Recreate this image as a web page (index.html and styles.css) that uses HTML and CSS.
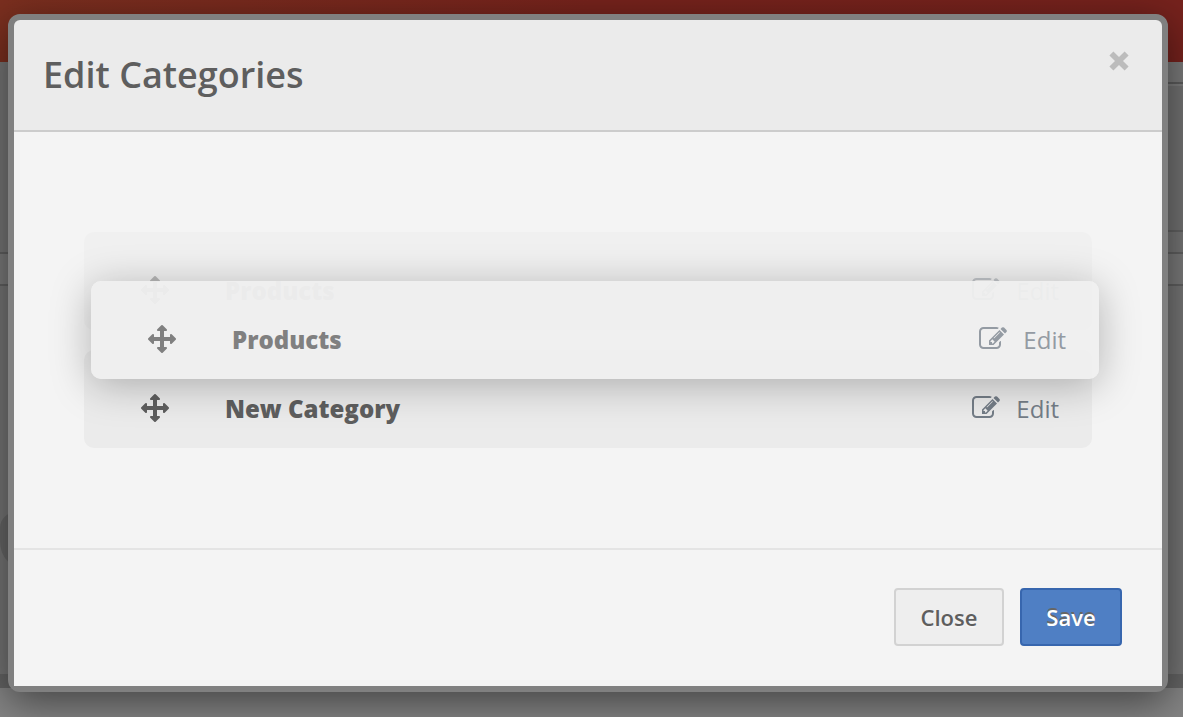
FILE: index.html
```html
<!DOCTYPE html>
<html lang="en">
<head>
<meta charset="utf-8">
<title>Edit Categories</title>
<link rel="stylesheet" href="styles.css">
</head>
<body>
<svg class="sprite" aria-hidden="true">
  <symbol id="move" viewBox="0 0 1792 1792"><path d="M1792 896q0 26-19 45l-256 256q-19 19-45 19t-45-19-19-45v-128h-384v384h128q26 0 45 19t19 45-19 45l-256 256q-19 19-45 19t-45-19l-256-256q-19-19-19-45t19-45 45-19h128v-384h-384v128q0 26-19 45t-45 19-45-19l-256-256q-19-19-19-45t19-45l256-256q19-19 45-19t45 19 19 45v128h384v-384h-128q-26 0-45-19t-19-45 19-45l256-256q19-19 45-19t45 19l256 256q19 19 19 45t-19 45-45 19h-128v384h384v-128q0-26 19-45t45-19 45 19l256 256q19 19 19 45z"/></symbol>
  <symbol id="edit" viewBox="0 0 1792 1792"><path d="M888 1184l116-116-152-152-116 116v56h96v96h56zm440-720q-16-16-33 1l-350 350q-17 17-1 33t33-1l350-350q17-17 1-33zm80 594v190q0 119-84.5 203.5t-203.5 84.5h-832q-119 0-203.5-84.5t-84.5-203.5v-832q0-119 84.5-203.5t203.5-84.5h832q63 0 117 25 15 7 18 23 3 17-9 29l-49 49q-14 14-32 8-23-6-45-6h-832q-66 0-113 47t-47 113v832q0 66 47 113t113 47h832q66 0 113-47t47-113v-126q0-13 9-22l64-64q15-15 35-7t20 29zm-96-738l288 288-672 672h-288v-288zm444 132l-92 92-288-288 92-92q28-28 68-28t68 28l152 152q28 28 28 68t-28 68z"/></symbol>
</svg>

<div class="page" aria-hidden="true">
  <div class="page-banner"></div>
  <div class="page-main">
    <div class="page-toolbar"></div>
    <div class="page-panel"></div>
  </div>
  <div class="page-gap"></div>
  <div class="page-row"></div>
  <div class="page-content"><div class="page-blob"></div></div>
  <div class="page-strip"></div>
  <div class="page-footer"></div>
</div>

<div class="overlay">
  <section class="modal" role="dialog" aria-labelledby="modal-title">
    <header class="modal-header">
      <h1 class="modal-title" id="modal-title">Edit Categories</h1>
      <button class="modal-close" type="button" aria-label="Dismiss">
        <svg width="20" height="20" viewBox="0 0 20 20"><path d="M4.4 .4 10 6 15.6 .4 19.6 4.4 14 10 19.6 15.6 15.6 19.6 10 14 4.4 19.6 .4 15.6 6 10 .4 4.4Z"/></svg>
      </button>
    </header>
    <div class="modal-body">
      <ul class="categories">
        <li class="category category-source">
          <svg class="icon handle"><use href="#move"/></svg>
          <span class="category-name">Products</span>
          <a class="edit-link" href="#"><svg class="icon"><use href="#edit"/></svg>Edit</a>
        </li>
        <li class="category">
          <svg class="icon handle"><use href="#move"/></svg>
          <span class="category-name">New Category</span>
          <a class="edit-link" href="#"><svg class="icon"><use href="#edit"/></svg>Edit</a>
        </li>
        <li class="category category-dragged">
          <svg class="icon handle"><use href="#move"/></svg>
          <span class="category-name">Products</span>
          <a class="edit-link" href="#"><svg class="icon"><use href="#edit"/></svg>Edit</a>
        </li>
      </ul>
    </div>
    <footer class="modal-footer">
      <button class="button" type="button">Close</button>
      <button class="button button-primary" type="button">Save</button>
    </footer>
  </section>
</div>
</body>
</html>
```

FILE: styles.css
```css
* {
  box-sizing: border-box;
}

body {
  margin: 0;
  overflow: hidden;
  font-family: "Open Sans", "Noto Sans", sans-serif;
  color: #5e5e5e;
}

.sprite {
  position: absolute;
  width: 0;
  height: 0;
}

/* Dimmed page behind the dialog */
.page {
  display: flex;
  flex-direction: column;
  height: 100vh;
  background: #757575;
}

.page-banner {
  height: 62px;
  background: linear-gradient(90deg, #7b2f1f, #76231c 50%, #76221d);
}

.page-main {
  padding-left: 50%;
}

.page-toolbar {
  height: 22px;
  border-bottom: 2px solid #5c5c5c;
  background: #7a7a7a;
}

.page-panel {
  height: 148px;
  border-top: 2px solid #7e7e7e;
  border-bottom: 2px solid #626262;
  background: #727272;
}

.page-gap {
  height: 22px;
  border-bottom: 2px solid #606060;
}

.page-row {
  height: 32px;
  border-bottom: 2px solid #606060;
  background: #7a7a7a;
}

.page-content {
  flex: 1;
  padding-top: 226px;
}

.page-blob {
  width: 40px;
  height: 58px;
  border-radius: 16px 0 0 28px;
  background: #666666;
}

.page-strip {
  height: 14px;
  background: #646464;
}

.page-footer {
  height: 29px;
  background: #848484;
}

/* Dialog */
.overlay {
  position: absolute;
  inset: 0;
  padding: 14px 15px 25px 8px;
}

.modal {
  border: 6px solid #808080;
  border-radius: 12px;
  background: #808080;
  box-shadow: 0 10px 40px rgba(0, 0, 0, 0.5);
}

.modal-header {
  display: flex;
  justify-content: space-between;
  align-items: flex-start;
  padding: 30px 33px 30px 29px;
  border-bottom: 2px solid #cccccc;
  border-radius: 6px 6px 0 0;
  background: #ebebeb;
}

.modal-title {
  margin: 0;
  font-size: 36px;
  line-height: 50px;
  font-weight: 600;
}

.modal-close {
  display: flex;
  margin-top: 1px;
  padding: 0;
  border: 0;
  background: none;
  fill: #bcbcbc;
  cursor: pointer;
}

.modal-body {
  padding: 100px 70px;
  background: #f4f4f4;
}

.categories {
  position: relative;
  display: grid;
  gap: 20px;
  margin: 0;
  padding: 0;
  list-style: none;
}

.category {
  display: flex;
  align-items: flex-start;
  padding: 40px 33px 20px 57px;
  border-radius: 10px;
  background: #ebebeb;
  font-size: 24px;
  line-height: 38px;
}

.icon {
  width: 28px;
  height: 28px;
  margin-top: 4px;
  fill: currentColor;
}

.handle {
  margin-right: 56px;
  cursor: move;
}

.category-name {
  flex: 1;
  font-weight: 800;
}

.edit-link {
  display: flex;
  align-items: flex-start;
  gap: 16px;
  color: #747d87;
  text-decoration: none;
}

.category-source {
  opacity: 0.4;
}

.category-dragged {
  position: absolute;
  top: 49px;
  left: 7px;
  width: 100%;
  background: rgba(239, 239, 239, 0.92);
  color: #808080;
  box-shadow: 0 6px 40px rgba(0, 0, 0, 0.27);
}

.category-dragged .edit-link {
  color: #949ba3;
}

.modal-footer {
  display: flex;
  justify-content: flex-end;
  gap: 16px;
  padding: 38px 40px 40px;
  border-top: 2px solid #e4e4e4;
  background: #f4f4f4;
}

.button {
  min-width: 110px;
  padding: 12px 24px;
  border: 2px solid #d2d2d2;
  border-radius: 4px;
  background: #eeeeee;
  color: #5e5e5e;
  font-family: inherit;
  font-size: 22px;
  line-height: 30px;
  font-weight: 600;
  text-shadow: 0 2px 0 #f4f4f4;
  cursor: pointer;
}

.button-primary {
  min-width: 102px;
  border-color: #3766ae;
  background: #4f7fc4;
  color: #ffffff;
  text-shadow: 0 -2px 0 #666666;
}
```
